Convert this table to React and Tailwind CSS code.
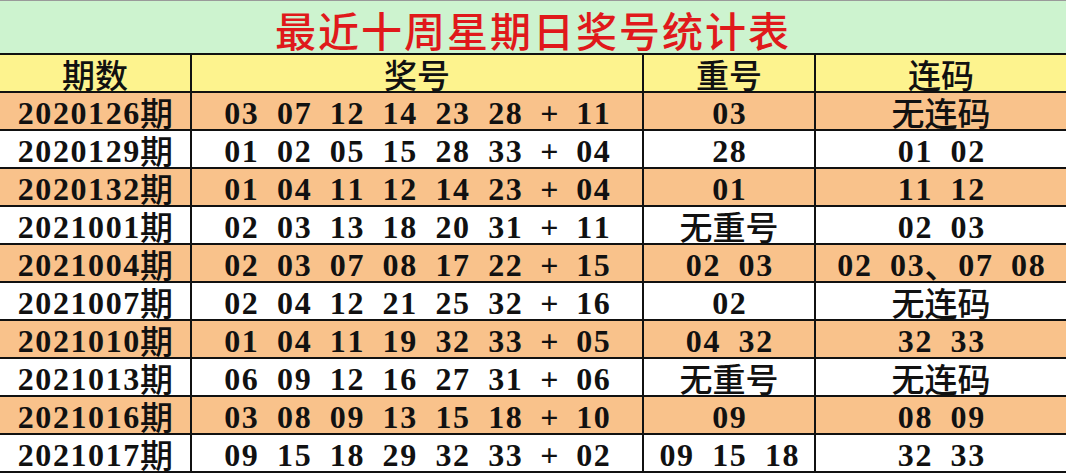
import React from 'react'

const rows = [
  ['2020126期', '03 07 12 14 23 28 + 11', '03', '无连码'],
  ['2020129期', '01 02 05 15 28 33 + 04', '28', '01 02'],
  ['2020132期', '01 04 11 12 14 23 + 04', '01', '11 12'],
  ['2021001期', '02 03 13 18 20 31 + 11', '无重号', '02 03'],
  ['2021004期', '02 03 07 08 17 22 + 15', '02 03', '02 03、07 08'],
  ['2021007期', '02 04 12 21 25 32 + 16', '02', '无连码'],
  ['2021010期', '01 04 11 19 32 33 + 05', '04 32', '32 33'],
  ['2021013期', '06 09 12 16 27 31 + 06', '无重号', '无连码'],
  ['2021016期', '03 08 09 13 15 18 + 10', '09', '08 09'],
  ['2021017期', '09 15 18 29 32 33 + 02', '09 15 18', '32 33'],
]

function Txt({ text }) {
  // every char sits in a fixed cell, half width for digits, full width for hanzi
  return (
    <span className="inline-flex items-end leading-none">
      {text.split('').map((ch, i) => {
        const wide = ch.charCodeAt(0) > 0x2e80
        if (wide) {
          return (
            <span
              key={i}
              className="inline-block w-[33px] text-center text-[33px] leading-[31px] font-medium text-[#111] [font-family:'Noto_Sans_CJK_SC',sans-serif]"
            >
              {ch}
            </span>
          )
        }
        return (
          <span
            key={i}
            className="inline-block w-[17.6px] text-center text-[32px] leading-[30px] font-bold text-[#111] [font-family:'Liberation_Serif',serif]"
          >
            {ch === ' ' ? '\u00a0' : ch}
          </span>
        )
      })}
    </span>
  )
}

function Cell({ text, bg }) {
  return (
    <div className={`flex h-[36px] items-center justify-center pt-[3px] ${bg}`}>
      <Txt text={text} />
    </div>
  )
}

export default function App() {
  return (
    <div className="h-[474px] w-[1066px] overflow-hidden bg-white">
      <div className="flex h-[53px] items-center justify-center border-t border-[#9a9a9a] bg-[#cdf3cf]">
        <span className="pt-[3px] text-[41px] leading-[44px] font-medium tracking-[2px] text-[#e0191b] [font-family:'Noto_Sans_CJK_SC',sans-serif]">
          最近十周星期日奖号统计表
        </span>
      </div>
      <div className="grid grid-cols-[190px_450px_170px_250px] gap-[2px] bg-[#111] py-[2px]">
        {['期数', '奖号', '重号', '连码'].map((h) => (
          <Cell key={h} text={h} bg="bg-[#fdf38e]" />
        ))}
        {rows.map((r, i) => {
          const bg = i % 2 === 0 ? 'bg-[#f9c28b]' : 'bg-white'
          return r.map((c, j) => <Cell key={i + '-' + j} text={c} bg={bg} />)
        })}
      </div>
    </div>
  )
}
